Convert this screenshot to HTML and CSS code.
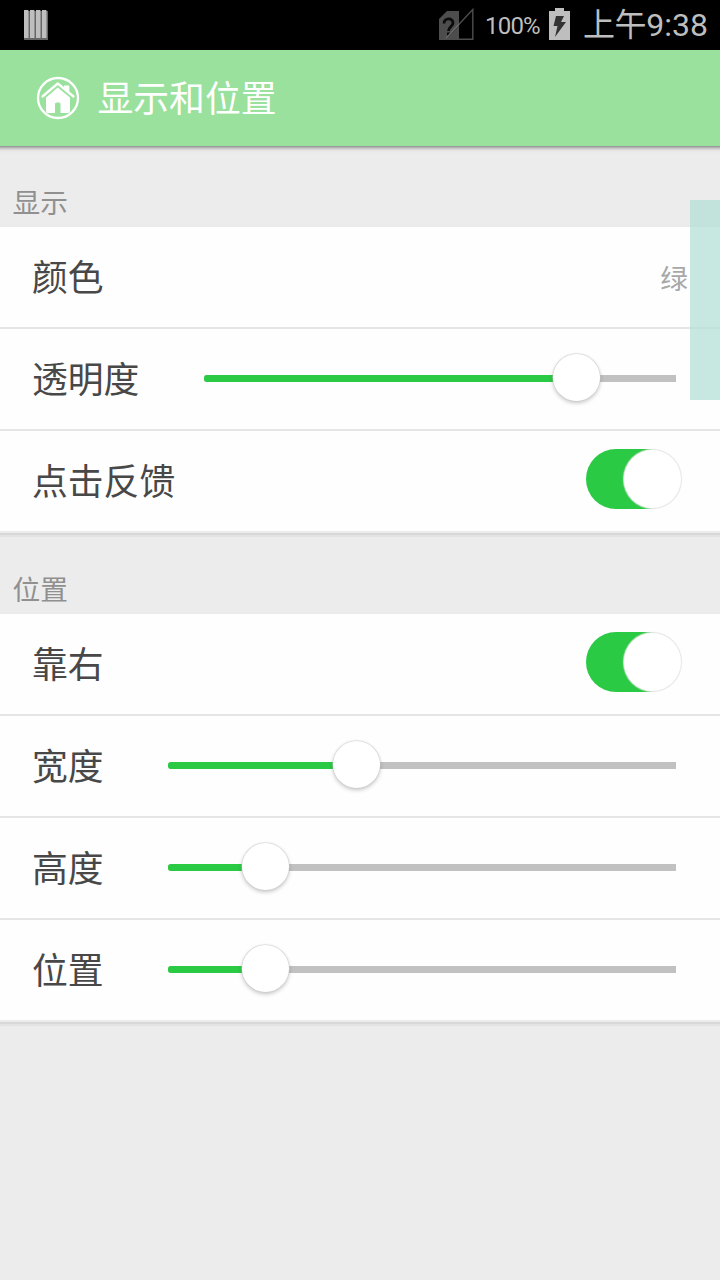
FILE: index.html
```html
<!DOCTYPE html>
<html lang="zh-CN">
<head>
<meta charset="utf-8">
<title>显示和位置</title>
<link rel="stylesheet" href="styles.css">
</head>
<body>
<div class="screen">
  <div class="status">
    <svg class="bars" width="24" height="30" viewBox="0 0 24 30">
      <path fill="#666" d="M0 0H24V30H0z"/>
      <path fill="#bebebe" d="M0 0H4.5V28H0zM6 0H10.5V28H6zM12 0H16.5V28H12zM18 0H22.5V28H18z"/>
      <path fill="#000" d="M4.5 0H6V1H4.5zM10.5 0H12V1H10.5zM16.5 0H18V1H16.5zM22.5 0H24V1H22.5z"/>
    </svg>
    <div class="status-right">
      <svg class="sim" width="36" height="33" viewBox="0 0 36 33">
        <path fill="#4d4d4d" d="M0 11L8 3H20V17L6 32H0z"/>
        <path fill="none" stroke="#4d4d4d" stroke-width="1.4" d="M6 31.3L33.800 1.5V31.3z"/>
        <path fill="none" stroke="#0b0b0b" stroke-width="2.8" d="M5 15.5C5 9.500 14 9.500 14 15C14 18.500 9.500 18.500 9.500 23"/>
        <path fill="#0b0b0b" d="M8 24.500H11V27.500H8z"/>
        <path fill="#4d4d4d" d="M7 31.500L20 17.500V31.500z"/>
        <path stroke="#6a6a6a" stroke-width="1.4" d="M7 30.300L20 16.300"/>
      </svg>
      <span class="percent">100%</span>
      <svg class="battery" width="21" height="32" viewBox="0 0 21 32">
        <path fill="#bebebe" d="M6 0H15V3H21V32H0V3H6z"/>
        <path fill="#333" d="M7 8H15L12 14H17L6 29L8.500 18H4.500z"/>
      </svg>
      <span class="clock">上午<span class="time">9:38</span></span>
    </div>
  </div>
  <div class="header">
    <svg class="home" width="44" height="44" viewBox="0 0 44 44">
      <circle cx="22" cy="22" r="20" fill="none" stroke="#fff" stroke-width="2.300"/>
      <path fill="none" stroke="#fff" stroke-width="2.300" stroke-linecap="round" stroke-linejoin="round" d="M6.500 20.500L21.800 7.500L37.500 20.500"/>
      <path fill="#fff" d="M28 9.500H33.300V17L28 12.700z"/>
      <path fill="#fff" d="M21.800 11.500L34 21.500V35Q34 37 32 37H24.500V28Q24.500 26.500 23 26.500H20.500Q19 26.500 19 28V37H12Q10 37 10 35V21.500z"/>
    </svg>
    <h1 class="title">显示和位置</h1>
  </div>
  <div class="header-shadow"></div>
  <h2 class="section first">显示</h2>
  <div class="group">
    <div class="row"><span class="label">颜色</span><span class="value">绿</span></div>
    <div class="row"><span class="label">透明度</span><div class="slider wide-label"><div class="fill" style="width:373px"></div><div class="knob"></div></div></div>
    <div class="row"><span class="label">点击反馈</span><div class="switch"><div class="thumb"></div></div></div>
  </div>
  <div class="group-shadow"></div>
  <h2 class="section">位置</h2>
  <div class="group">
    <div class="row"><span class="label">靠右</span><div class="switch"><div class="thumb"></div></div></div>
    <div class="row"><span class="label">宽度</span><div class="slider"><div class="fill" style="width:189px"></div><div class="knob"></div></div></div>
    <div class="row"><span class="label">高度</span><div class="slider"><div class="fill" style="width:98px"></div><div class="knob"></div></div></div>
    <div class="row"><span class="label">位置</span><div class="slider"><div class="fill" style="width:98px"></div><div class="knob"></div></div></div>
  </div>
  <div class="group-shadow"></div>
  <div class="touch-bar"></div>
</div>
</body>
</html>
```

FILE: styles.css
```css
* { box-sizing: border-box; }
body { margin: 0; background: #ececec; font-family: Roboto, "Noto Sans CJK SC", sans-serif; }
.screen { position: relative; width: 720px; height: 1280px; overflow: hidden; background: #ececec; }
.status { display: flex; justify-content: space-between; height: 50px; padding: 0 12px 0 24px; background: #000; color: #bebebe; }
.bars { margin-top: 10px; }
.status-right { display: flex; align-items: flex-start; }
.sim { margin: 8px 10px 0 0; }
.percent { width: 56px; margin-right: 8px; padding-top: 1px; font-size: 24px; line-height: 50px; letter-spacing: -0.8px; white-space: nowrap; }
.battery { margin: 8px 13px 0 0; }
.clock { width: 125px; padding-top: 1px; font-size: 32px; line-height: 49px; letter-spacing: -0.4px; white-space: nowrap; }
.time { letter-spacing: 0; }
.header { display: flex; align-items: center; height: 96px; padding-left: 35px; background: #99e19d; }
.home { margin: 0 18px 0 0.5px; }
.title { margin: 0; padding-top: 4px; font-size: 35.8px; font-weight: 400; line-height: 92px; color: #fff; }
.header-shadow { height: 7px; background: linear-gradient(#999 0 1px, #b5b2b3 1px 2px, #cac7c8 2px 3px, #d8d6d7 3px 4px, #e4e4e4 4px, #ececec); }
.section { height: 77px; margin: 0; padding: 26px 12.5px 0; font-size: 27.7px; font-weight: 400; line-height: 56px; color: #909090; border-bottom: 2px solid #eaeaea; }
.section.first { height: 74px; padding-top: 23px; }
.group { background: #fefefe; }
.row { display: flex; align-items: center; height: 102px; padding: 0 32px; border-bottom: 2px solid #e5e5e5; }
.row:last-child { height: 100px; border-bottom: 0; }
.label { padding-top: 4px; font-size: 35.8px; line-height: 96px; color: #484848; white-space: nowrap; }
.value { margin-left: auto; font-size: 27.7px; color: #a8a8a8; }
.slider { display: flex; align-items: center; width: 508px; height: 7px; margin: 0 12px 1px auto; background: #c1c1c1; border-radius: 3px 0 0 3px; }
.slider.wide-label { width: 472px; }
.fill { height: 7px; border-radius: 3px 0 0 3px; background: #2aca44; }
.knob { flex: none; width: 47px; height: 47px; margin: -3px 0 0 -24px; border-radius: 50%; background: #fff; box-shadow: 0 0 1px 0.5px #ccc, 0 2px 4px rgba(0,0,0,.24); }
.switch { display: flex; justify-content: flex-end; align-items: center; width: 96px; height: 60px; margin: 0 6px 4px auto; padding-right: 1px; border-radius: 30px; background: linear-gradient(90deg, #2aca44 62px, transparent 70px); }
.thumb { width: 57px; height: 58px; border-radius: 50%; background: #fff; box-shadow: 0 0 1px 1px #e5e5e5; }
.group-shadow { height: 6px; background: linear-gradient(#ececec 0 2px, #d8d8d8 2px 4px, #e3e3e3 4px 6px); }
.touch-bar { position: absolute; right: 0; top: 200px; width: 30px; height: 200px; background: rgba(178,224,213,.73); }
```
